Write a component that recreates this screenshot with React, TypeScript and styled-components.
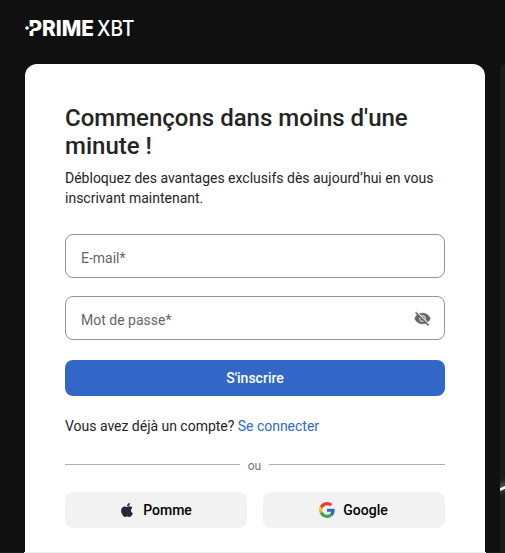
import React from "react";
import styled, { createGlobalStyle } from "styled-components";
import { FaApple } from "react-icons/fa";

const GlobalStyle = createGlobalStyle`
  *, *::before, *::after { box-sizing: border-box; }
  html, body { margin: 0; height: 100%; overflow: hidden; }
  body {
    background: #101010;
    color: #242424;
    font-family: Roboto, "Liberation Sans", sans-serif;
    font-size: 14px;
  }
  button, input { font: inherit; letter-spacing: inherit; }
`;

const Page = styled.div`
  display: flex;
  flex-direction: column;
  height: 553px;
  width: 505px;
  overflow: hidden;
  border-bottom: 1px solid #ececec;
  border-image: linear-gradient(to right, #1c1c1c 25px, #ececec 25px 485px, #1c1c1c 485px) 1;
  border-width: 0 0 1px;
`;

const Header = styled.header`
  flex: none;
  height: 64px;
  padding: 12px 0 0 25px;
`;

const Logo = styled.svg`
  display: block;
  width: 120px;
  height: 36px;
  fill: #fff;
`;

const LogoWord = styled.text<{ $bold?: boolean }>`
  font-family: Inter, sans-serif;
  font-size: 22px;
  font-weight: ${({ $bold }) => ($bold ? 800 : 500)};
`;

const Main = styled.main`
  flex: 1;
  min-height: 0;
  display: flex;
  gap: 15px;
  padding-left: 25px;
`;

const Card = styled.section`
  flex: none;
  width: 460px;
  padding: 40px 40px 0;
  background: #fff;
  border-radius: 12px 12px 0 0;
`;

const Promo = styled.aside`
  flex: 1;
  overflow: hidden;
  background: #1b1b1b;
  border-radius: 12px 0 0 0;
`;

const Glow = styled.svg`
  display: block;
  width: 5px;
  height: 40px;
  margin-top: 404px;
`;

const Title = styled.h1`
  margin: 0;
  font-size: 24px;
  line-height: 28px;
  font-weight: 500;
`;

const Lead = styled.p`
  margin: 8px 0 26px;
  line-height: 20px;
`;

const Field = styled.label`
  display: flex;
  align-items: center;
  height: 44px;
  margin-bottom: 18px;
  padding: 3px 13px 0 15px;
  border: 1px solid #949494;
  border-radius: 8px;
  color: #666;
`;

const Input = styled.input`
  flex: 1;
  min-width: 0;
  padding: 0;
  border: 0;
  outline: 0;
  background: none;
  color: #242424;
  &::placeholder { color: #666; opacity: 1; }
`;

const RevealSvg = styled.svg`
  width: 17px;
  height: 17px;
  margin-bottom: 3px;
  fill: currentColor;
  stroke: currentColor;
  stroke-width: 0.9px;
`;

const Submit = styled.button`
  display: block;
  width: 100%;
  height: 36px;
  margin-top: 20px;
  padding: 0;
  border: 0;
  border-radius: 8px;
  background: #3267c8;
  color: #fff;
  font-weight: 500;
`;

const Account = styled.p`
  margin: 20px 0 0;
  line-height: 20px;
  letter-spacing: -0.02px;
`;

const Link = styled.a`
  color: #3267c8;
  text-decoration: none;
`;

const Divider = styled.div`
  display: grid;
  grid-template-columns: 175px 1fr 176px;
  align-items: center;
  height: 16px;
  margin-top: 20px;
  color: #757575;
  font-size: 12px;
  &::before, &::after {
    content: "";
    height: 1px;
    margin-bottom: 1px;
    background: #a9b1b9;
  }
`;

const DividerText = styled.span`
  padding-top: 2px;
  line-height: 16px;
  text-align: center;
`;

const Providers = styled.div`
  display: grid;
  grid-template-columns: 1fr 1fr;
  gap: 16px;
  margin-top: 20px;
`;

const Provider = styled.button`
  display: flex;
  align-items: center;
  justify-content: center;
  gap: 8px;
  height: 36px;
  padding: 0 1px 0 0;
  border: 0;
  border-radius: 8px;
  background: #f2f2f2;
  color: #000;
  font-weight: 500;
`;

const AppleIcon = styled(FaApple)`
  width: 16px;
  height: 16px;
  color: #282838;
`;

const GoogleSvg = styled.svg`
  width: 16px;
  height: 16px;
`;

function RevealIcon() {
  return (
    <RevealSvg viewBox="0 0 24 24" aria-hidden="true">
      <path d="M12 7c2.760 0 5 2.240 5 5 0 .65-.13 1.260-.36 1.830l2.920 2.920c1.510-1.260 2.700-2.890 3.430-4.750-1.730-4.390-6-7.500-11-7.500-1.400 0-2.740.25-3.980.7l2.160 2.160C10.740 7.130 11.350 7 12 7zM2 4.270l2.280 2.280.46.46C3.080 8.300 1.780 10.020 1 12c1.730 4.390 6 7.500 11 7.500 1.550 0 3.030-.3 4.380-.84l.42.42L19.730 22 21 20.730 3.270 3 2 4.270zM7.530 9.800l1.550 1.550c-.05.21-.08.43-.08.65 0 1.660 1.340 3 3 3 .22 0 .44-.03.65-.08l1.550 1.550c-.67.33-1.410.53-2.200.53-2.760 0-5-2.240-5-5 0-.79.2-1.530.53-2.200zm4.310-.78l3.150 3.150.02-.16c0-1.660-1.340-3-3-3l-.17.01z" />
    </RevealSvg>
  );
}

function GoogleIcon() {
  return (
    <GoogleSvg viewBox="0 0 48 48" aria-hidden="true">
      <path fill="#f03e2a" d="M24 9.5c3.5 0 6.7 1.2 9.2 3.6l6.900-6.900C35.900 2.400 30.500 0 24 0 14.600 0 6.500 5.400 2.600 13.200l8 6.200C12.400 13.700 17.700 9.500 24 9.500z" />
      <path fill="#3267c8" d="M47 24.500c0-1.600-.2-3.100-.4-4.500H24v9h12.900c-.6 3-2.300 5.500-4.800 7.200l7.700 6C44.400 38 47 31.800 47 24.500z" />
      <path fill="#f5b62a" d="M10.500 28.600c-.5-1.500-.8-3-.8-4.600s.3-3.100.8-4.600l-8-6.200C.9 16.500 0 20.100 0 24s.9 7.500 2.600 10.800l7.900-6.200z" />
      <path fill="#42a648" d="M24 48c6.500 0 11.900-2.100 15.900-5.800l-7.700-6c-2.200 1.500-4.900 2.300-8.200 2.300-6.300 0-11.600-4.200-13.500-9.900l-8 6.200C6.500 42.600 14.600 48 24 48z" />
    </GoogleSvg>
  );
}

function PrimeLogo() {
  return (
    <Logo viewBox="0 0 120 36" role="img" aria-label="PrimeXBT">
      <circle cx="2" cy="16" r="1.8" />
      <LogoWord $bold x="3.500" y="24" textLength="65.500" lengthAdjust="spacingAndGlyphs">PRIME</LogoWord>
      <LogoWord x="72" y="24" textLength="37.500" lengthAdjust="spacingAndGlyphs">XBT</LogoWord>
      <path fill="#101010" d="M4 14.500h4.500V17H7l-1 2H4z" />
    </Logo>
  );
}

export default function App() {
  return (
    <>
      <GlobalStyle />
      <Page>
        <Header><PrimeLogo /></Header>
        <Main>
          <Card>
            <Title>Commençons dans moins d'une minute !</Title>
            <Lead>Débloquez des avantages exclusifs dès aujourd’hui en vous inscrivant maintenant.</Lead>
            <form onSubmit={(e) => e.preventDefault()}>
              <Field><Input type="email" placeholder="E-mail*" /></Field>
              <Field><Input type="password" placeholder="Mot de passe*" /><RevealIcon /></Field>
              <Submit type="submit">S'inscrire</Submit>
            </form>
            <Account>Vous avez déjà un compte? <Link href="#">Se connecter</Link></Account>
            <Divider><DividerText>ou</DividerText></Divider>
            <Providers>
              <Provider type="button"><AppleIcon />Pomme</Provider>
              <Provider type="button"><GoogleIcon />Google</Provider>
            </Providers>
          </Card>
          <Promo>
            <Glow viewBox="0 0 5 40">
              <defs>
                <filter id="glow" x="-10" y="0" width="30" height="40" filterUnits="userSpaceOnUse">
                  <feGaussianBlur stdDeviation="3" />
                </filter>
              </defs>
              <path d="M-4 22L9 16" stroke="#fff" strokeWidth="5" opacity=".4" filter="url(#glow)" />
              <path d="M-2 22.500L8 18" stroke="#fff" strokeWidth="2.500" />
            </Glow>
          </Promo>
        </Main>
      </Page>
    </>
  );
}
